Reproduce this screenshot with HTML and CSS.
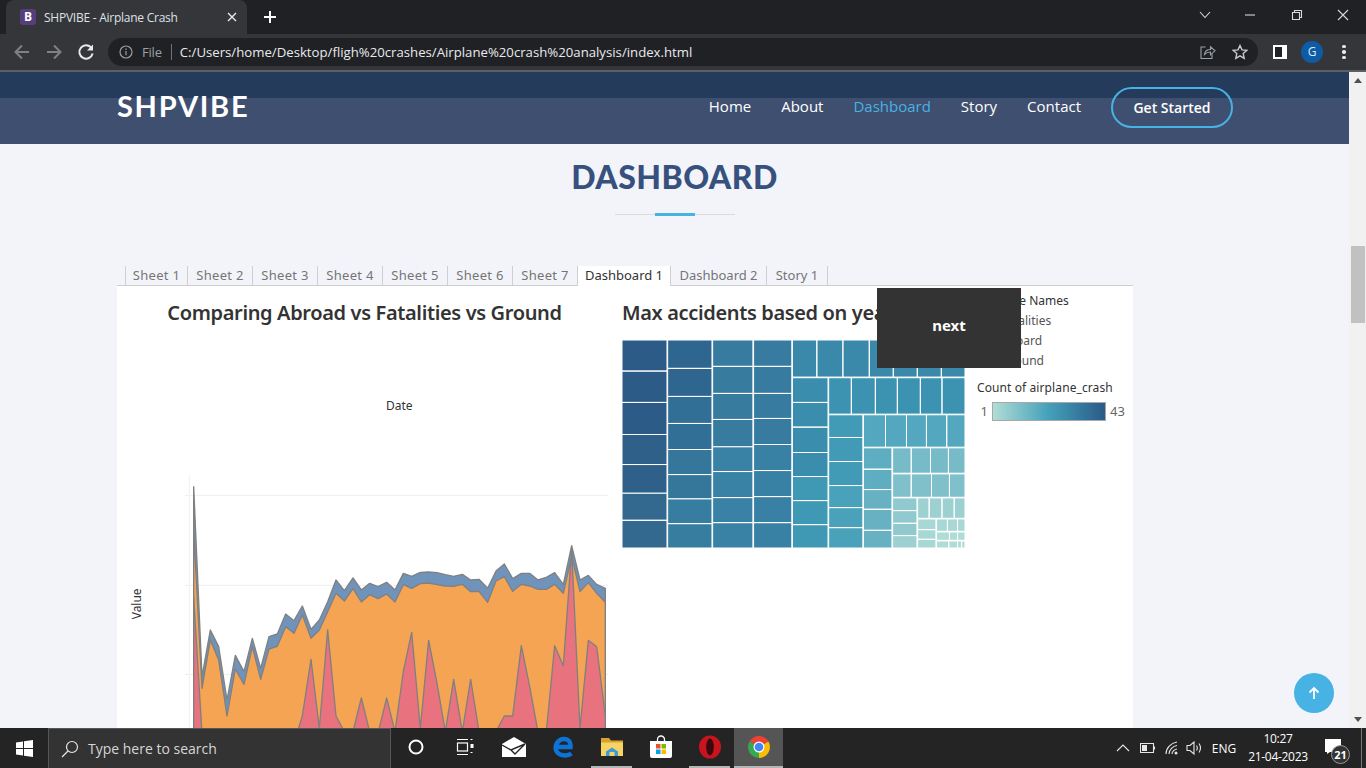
FILE: index.html
```html
<!DOCTYPE html>
<html lang="en">
<head>
<meta charset="utf-8">
<title>SHPVIBE - Airplane Crash</title>
<link rel="stylesheet" href="styles.css">
</head>
<body>
<div class="tabstrip">
  <div class="tab">
    <span class="favicon">B</span>
    <span class="tab-title">SHPVIBE - Airplane Crash</span>
    <svg class="tab-close" width="10" height="10" viewBox="0 0 10 10"><path d="M1 1l8 8M9 1l-8 8"/></svg>
  </div>
  <svg class="new-tab" width="14" height="14" viewBox="0 0 14 14"><path d="M7 1v12M1 7h12"/></svg>
  <div class="win-controls">
    <svg class="win-chev" width="12" height="8" viewBox="0 0 12 8"><path d="M1 1l5 5.500L11 1"/></svg>
    <svg class="win-min" width="12" height="12" viewBox="0 0 12 12"><path d="M1 6h10"/></svg>
    <svg class="win-max" width="12" height="12" viewBox="0 0 12 12"><path d="M1.500 3.500h7v7h-7zM3.500 3.500v-2h7v7h-2"/></svg>
    <svg class="win-x" width="12" height="12" viewBox="0 0 12 12"><path d="M1 1l10 10M11 1L1 11"/></svg>
  </div>
</div>
<div class="toolbar">
  <svg class="nav-ico dim" width="20" height="20" viewBox="0 0 20 20"><path d="M17 10H3.500M10 3.500L3.500 10l6.500 6.500"/></svg>
  <svg class="nav-ico dim" width="20" height="20" viewBox="0 0 20 20"><path d="M3 10h13.500M10 3.500l6.500 6.500-6.500 6.500"/></svg>
  <svg class="nav-ico" width="20" height="20" viewBox="0 0 20 20"><path d="M15.500 6A6.700 6.700 0 1 0 16.600 11.500"/><path class="fill" d="M17 2.500v6h-6z"/></svg>
  <div class="omnibox">
    <svg class="info" width="14" height="14" viewBox="0 0 14 14"><circle cx="7" cy="7" r="6"/><path d="M7 6v4.200M7 3.600v1.300"/></svg>
    <span class="file">File</span>
    <span class="url">C:/Users/home/Desktop/fligh%20crashes/Airplane%20crash%20analysis/index.html</span>
    <svg class="share" width="16" height="16" viewBox="0 0 16 16"><path d="M5.500 3H1v11.500h11V10"/><path d="M4.500 10.500C5 7 7.500 5.500 10.500 5.500V2.800L15 6.800l-4.500 4V8C8 8 6 8.800 4.500 10.500z"/></svg>
    <svg class="star" width="16" height="16" viewBox="0 0 16 16"><path d="M8 1.500l2 4.400 4.800.5-3.600 3.200 1 4.700L8 11.900l-4.200 2.400 1-4.700L1.200 6.400 6 5.900z"/></svg>
  </div>
  <span class="panel-ico"><span class="panel-inner"></span></span>
  <span class="avatar">G</span>
  <span class="kebab"><i></i><i></i><i></i></span>
</div>
<div class="viewport">
  <main class="page">
    <header class="site-header">
      <div class="logo">SHPVIBE</div>
      <nav class="site-nav">
        <a>Home</a><a>About</a><a class="current">Dashboard</a><a>Story</a><a>Contact</a>
        <a class="cta">Get Started</a>
      </nav>
    </header>
    <section class="section">
      <h2 class="section-title">DASHBOARD</h2>
      <div class="section-rule"></div>
      <div class="embed">
        <div class="sheet-tabs">
          <span class="sheet-tab first">Sheet 1</span>
          <span class="sheet-tab">Sheet 2</span>
          <span class="sheet-tab">Sheet 3</span>
          <span class="sheet-tab">Sheet 4</span>
          <span class="sheet-tab">Sheet 5</span>
          <span class="sheet-tab">Sheet 6</span>
          <span class="sheet-tab">Sheet 7</span>
          <span class="sheet-tab active">Dashboard 1</span>
          <span class="sheet-tab">Dashboard 2</span>
          <span class="sheet-tab">Story 1</span>
        </div>
        <div class="board">
          <div class="col-area">
            <h3 class="viz-title">Comparing Abroad vs Fatalities vs Ground</h3>
            <div class="axis-top">Date</div>
            <svg class="area-chart" width="492" height="260" viewBox="0 0 1476 780">
              <path class="grid" d="M195 76H1465M195 346H1465M195 613H1465"/>
              <path class="axis" d="M208 15V790"/>
              <path class="s-blue" d="M221 50L246 620 271 480 296 530 321 690 346 556 372 605 397 505 422 595 447 500 472 492 497 432 522 452 547 408 573 478 598 450 623 395 648 330 673 362 699 324 724 360 749 340 774 350 800 337 825 360 850 310 875 319 901 307 926 306 951 308 976 314 1001 319 1027 313 1052 330 1077 328 1103 355 1128 303 1153 282 1178 326 1204 310 1229 310 1254 330 1279 322 1304 308 1330 343 1355 227 1380 330 1405 316 1430 343 1456 355V800H221Z"/>
              <path class="s-orange" d="M221 180L246 655 271 510 296 570 321 738 346 597 372 643 397 530 422 628 447 537 472 529 497 470 522 490 547 435 573 505 598 480 623 425 648 370 673 393 699 356 724 396 749 374 774 386 800 372 825 396 850 344 875 355 901 341 926 339 951 344 976 348 1001 349 1027 343 1052 365 1077 364 1103 397 1128 333 1153 320 1178 364 1204 343 1229 348 1254 358 1279 358 1304 343 1330 370 1355 260 1380 365 1405 338 1430 370 1456 397V800H221Z"/>
              <path class="s-red" d="M221 380L246 790H531L547 738 573 568 598 775 623 480 648 738 673 785H699L724 684 749 785H775L800 684 825 785 850 605 875 487 901 775 926 511 951 640 976 785 1001 628 1027 785 1052 628 1077 785H1128L1153 738H1178L1204 527 1229 650 1254 785H1279L1304 527 1330 587 1355 240 1380 775 1405 511 1430 530 1456 738V800H221Z"/>
              <text class="value-label" transform="translate(62 448) rotate(-90)">Value</text>
            </svg>
          </div>
          <div class="col-tree">
            <h3 class="viz-title left">Max accidents based on year</h3>
            <svg class="treemap" width="343" height="208" viewBox="36 240 1014 623" preserveAspectRatio="none">
              <path fill="#2c5b87" d="M36 240H169V333H36ZM36 333H169V427H36ZM36 427H169V523H36Z"/>
              <path fill="#2e608a" d="M36 523H169V613H36ZM36 613H169V699H36Z"/>
              <path fill="#33698f" d="M36 699H169V780H36ZM36 780H169V863H36Z"/>
              <path fill="#2f6690" d="M171 240H302V325H171ZM171 325H302V409H171Z"/>
              <path fill="#326f96" d="M171 409H302V490H171ZM171 490H302V568H171Z"/>
              <path fill="#35779b" d="M171 568H302V643H171ZM171 643H302V716H171Z"/>
              <path fill="#377d9f" d="M171 716H302V790H171ZM171 790H302V863H171Z"/>
              <path fill="#377b9f" d="M304 240H423V319H304ZM304 319H423V400H304ZM304 400H423V478H304ZM304 478H423V560H304Z"/>
              <path fill="#3982a5" d="M304 560H423V634H304ZM304 634H423V712H304ZM304 712H423V787H304ZM304 787H423V863H304Z"/>
              <path fill="#377ca0" d="M425 240H538V319H425ZM425 319H538V400H425ZM425 400H538V475H425ZM425 475H538V553H425Z"/>
              <path fill="#3981a4" d="M425 553H538V631H425ZM425 631H538V709H425ZM425 709H538V787H425ZM425 787H538V863H425Z"/>
              <path fill="#3a88aa" d="M540 240H612V351H540ZM612 240H689V351H612ZM689 240H767V351H689ZM767 240H838V351H767ZM838 240H909V351H838ZM909 240H980V351H909ZM980 240H1050V351H980Z"/>
              <path fill="#3b8dae" d="M540 353H645V427H540ZM540 427H645V501H540ZM540 501H645V577H540ZM540 577H645V649H540Z"/>
              <path fill="#3f98b4" d="M540 649H645V721H540ZM540 721H645V793H540ZM540 793H645V863H540Z"/>
              <path fill="#3c93b1" d="M647 353H714V462H647ZM714 353H785V462H714ZM785 353H850V462H785ZM850 353H918V462H850ZM918 353H982V462H918ZM982 353H1050V462H982Z"/>
              <path fill="#419bb6" d="M647 464H748V532H647ZM647 532H748V604H647ZM647 604H748V676H647Z"/>
              <path fill="#49a2ba" d="M647 676H748V742H647ZM647 742H748V802H647ZM647 802H748V863H647Z"/>
              <path fill="#53a7be" d="M750 464H815V561H750ZM815 464H877V561H815ZM877 464H936V561H877ZM936 464H996V561H936ZM996 464H1050V561H996Z"/>
              <path fill="#5eadc1" d="M750 563H834V627H750ZM750 627H834V688H750Z"/>
              <path fill="#67b1c3" d="M750 688H834V747H750ZM750 747H834V810H750ZM750 810H834V863H750Z"/>
              <path fill="#77bac8" d="M836 563H891V639H836ZM891 563H948V639H891ZM948 563H1001V639H948ZM1001 563H1050V639H1001Z"/>
              <path fill="#80c0cb" d="M836 641H891V711H836ZM891 641H951V711H891ZM951 641H1004V711H951ZM1004 641H1050V711H1004Z"/>
              <path fill="#90c9ce" d="M836 713H908V751H836ZM836 751H908V789H836ZM836 789H908V826H836Z"/>
              <path fill="#9cd0d1" d="M836 826H908V863H836ZM910 713H944V774H910ZM944 713H982V774H944ZM982 713H1018V774H982ZM1018 713H1050V774H1018Z"/>
              <path fill="#a8d8d5" d="M910 776H964V808H910ZM910 808H964V837H910ZM910 837H964V863H910ZM966 776H998V813H966ZM998 776H1028V813H998ZM1028 776H1050V813H1028Z"/>
              <path fill="#b0dcd6" d="M966 815H1004V840H966ZM1004 815H1028V840H1004ZM1028 815H1050V840H1028ZM966 842H1002V863H966ZM1002 842H1028V863H1002ZM1028 842H1040V863H1028ZM1040 842H1050V863H1040Z"/>
            </svg>
          </div>
          <aside class="col-legend">
            <div class="legend-head">Measure Names</div>
            <ul class="legend-list">
              <li>Fatalities</li>
              <li>Aboard</li>
              <li>Ground</li>
            </ul>
            <div class="legend-head ramp-title">Count of airplane_crash</div>
            <div class="ramp-row"><span class="ramp-min">1</span><span class="ramp"></span><span class="ramp-max">43</span></div>
          </aside>
          <div class="next-box">next</div>
        </div>
      </div>
    </section>
    <a class="back-top"><svg width="14" height="14" viewBox="0 0 14 14"><path d="M7 13V2M2.500 6.500L7 2l4.500 4.500"/></svg></a>
  </main>
  <div class="scrollbar">
    <span class="sb-btn"><i class="tri-up"></i></span>
    <span class="sb-track"><span class="sb-thumb"></span></span>
    <span class="sb-btn"><i class="tri-down"></i></span>
  </div>
</div>
<footer class="taskbar">
  <span class="start">
    <svg width="17" height="17" viewBox="0 0 17 17"><path d="M0 2.400L7 1.400V8H0ZM8 1.300L17 0V8H8ZM0 9H7V15.600L0 14.600ZM8 9H17V17L8 15.700Z"/></svg>
  </span>
  <div class="search">
    <svg width="20" height="20" viewBox="0 0 20 20"><circle cx="12" cy="8" r="5.500"/><path d="M8 12l-6 6"/></svg>
    <span>Type here to search</span>
  </div>
  <span class="tb-app"><svg width="18" height="18" viewBox="0 0 18 18"><circle cx="9" cy="9" r="6.500" fill="none" stroke="#fff" stroke-width="2"/></svg></span>
  <span class="tb-app"><svg width="18" height="18" viewBox="0 0 18 18"><g fill="none" stroke="#fff" stroke-width="1.200"><path d="M1 1.500H12M1 16.500H12"/><rect x="1.500" y="5" width="10" height="8"/><path d="M14.500 1.500h2M14.500 14.500h2"/></g><rect x="14.500" y="6" width="3" height="4" fill="#fff"/></svg></span>
  <span class="tb-app"><svg width="24" height="20" viewBox="0 0 24 20"><path fill="#fff" d="M0 7L12 0l12 7V20H0z"/><path fill="none" stroke="#242424" stroke-width="1.400" d="M0 8L9 13 23 7 13 17 9 13"/></svg></span>
  <span class="tb-app"><svg width="22" height="22" viewBox="0 0 22 22"><path fill="none" stroke="#0c74d6" stroke-width="4.500" d="M19.500 17.500C16 20 6.500 21 4 14 2.500 8 7 3 12 3c4.500 0 7 3 6.500 8H4"/></svg></span>
  <span class="tb-app wide-mark"><svg width="22" height="20" viewBox="0 0 22 20"><path fill="#d9a22c" d="M0 1h8l2 2.500h12V19H0z"/><path fill="#f6d365" d="M0 5.500h22V19H0z"/><path fill="#3f9bd8" d="M5 19v-4.500L11 10.500l6 4V19h-3.500v-4h-5v4z"/></svg></span>
  <span class="tb-app"><svg width="24" height="24" viewBox="0 0 24 24"><path fill="none" stroke="#fff" stroke-width="1.300" d="M8.500 6V4.500a3.500 3.500 0 0 1 7 0V6"/><path fill="#fff" d="M1 6h22v15a2 2 0 0 1-2 2H3a2 2 0 0 1-2-2z"/><rect x="7" y="9" width="4.500" height="4.500" fill="#f25022"/><rect x="12.500" y="9" width="4.500" height="4.500" fill="#7fba00"/><rect x="7" y="14.500" width="4.500" height="4.500" fill="#00a4ef"/><rect x="12.500" y="14.500" width="4.500" height="4.500" fill="#ffb900"/></svg></span>
  <span class="tb-app wide-mark"><svg width="24" height="24" viewBox="0 0 24 24"><ellipse cx="12" cy="12" rx="11" ry="11.500" fill="#c8141f"/><ellipse cx="12" cy="12" rx="3.800" ry="8.500" fill="#3a0a0e"/></svg></span>
  <span class="tb-app on"><svg width="24" height="24" viewBox="0 0 24 24"><path fill="#ea4335" d="M12 12L2.500 6.500A11 11 0 0 1 21.500 6.500Z"/><path fill="#fbbc05" d="M12 12L21.500 6.500A11 11 0 0 1 12 23Z"/><path fill="#34a853" d="M12 12L12 23A11 11 0 0 1 2.500 6.500Z"/><circle cx="12" cy="12" r="5.500" fill="#fff"/><circle cx="12" cy="12" r="4.300" fill="#4285f4"/></svg></span>
  <div class="tray">
    <span class="tray-cell c25"><svg width="14" height="8" viewBox="0 0 14 8"><path d="M1 7l6-6 6 6"/></svg></span>
    <span class="tray-cell c25"><svg width="16" height="10" viewBox="0 0 16 10"><path d="M.5.500h13v9H.5zM14.500 3.500v3"/><rect class="fill" x="2" y="2" width="5" height="6"/></svg></span>
    <span class="tray-cell c23"><svg width="14" height="14" viewBox="0 0 14 14"><path d="M1 13C1 7 6 2 12 1M4 13C4 9 8 5 12 4.500M7 13c0-2 2-4.500 5-5"/><circle class="fill" cx="11" cy="12" r="1.500"/></svg></span>
    <span class="tray-cell c23"><svg width="17" height="14" viewBox="0 0 17 14"><path d="M1 4.500h3L8 1v12L4 9.500H1zM10.500 4.500c1 1.500 1 3.500 0 5M13 2.500c2 3 2 6 0 9"/></svg></span>
    <span class="tray-cell eng">ENG</span>
    <span class="clock"><span>10:27</span><span>21-04-2023</span></span>
    <span class="notif">
      <svg width="18" height="15" viewBox="0 0 18 15"><path fill="#fff" d="M0 0h16v13H5l-3 2v-2H0z"/></svg>
      <span class="notif-badge">21</span>
    </span>
    <span class="show-desktop"></span>
  </div>
</footer>
</body>
</html>
```
FILE: styles.css
```css
* { box-sizing: border-box; }
html, body { margin: 0; height: 768px; overflow: hidden; }
body { display: flex; flex-direction: column; font-family: "Open Sans", sans-serif; background: #202124; }
svg { display: block; flex: none; }

/* browser chrome */
.tabstrip { height: 34px; flex: none; background: #202124; display: flex; align-items: center; padding-left: 6px; }
.tab { width: 241px; height: 34px; background: #35363a; border-radius: 8px 8px 0 0; display: flex; align-items: center; padding: 0 10px 0 14px; color: #dee1e6; }
.favicon { width: 16px; height: 16px; border-radius: 3px; background: #563d7c; color: #fff; font: 700 12px/16px "Open Sans", sans-serif; text-align: center; flex: none; }
.tab-title { margin-left: 8px; font-size: 12px; letter-spacing: -.25px; white-space: nowrap; flex: 1; }
.tab-close { fill: none; stroke: #e8eaed; stroke-width: 1.400; }
.new-tab { margin-left: 16px; fill: none; stroke: #fff; stroke-width: 2; }
.win-controls { margin-left: auto; display: flex; align-items: center; height: 100%; padding-bottom: 4px; }
.win-controls svg { fill: none; stroke: #d8d9da; stroke-width: 1.100; }
.win-chev { margin-right: 33px; }
.win-min { margin-right: 35px; }
.win-max { margin-right: 34px; }
.win-x { margin-right: 17px; }
.toolbar { height: 38px; flex: none; background: #35363a; border-bottom: 2px solid #5b6068; display: flex; align-items: center; padding: 0 0 0 12px; }
.nav-ico { fill: none; stroke: #e8eaed; stroke-width: 2; margin-right: 12px; }
.nav-ico.dim { stroke: #7f8184; }
.nav-ico .fill { fill: #e8eaed; stroke: none; }
.omnibox { width: 1150px; height: 28px; flex: none; border-radius: 14px; background: #202124; display: flex; align-items: center; padding-left: 11px; }
.info { fill: none; stroke: #9aa0a6; stroke-width: 1.200; }
.file { margin-left: 9px; padding-right: 9px; font-size: 13px; line-height: 16px; color: #9aa0a6; border-right: 1px solid #6f7276; letter-spacing: -.2px; }
.url { margin-left: 8px; flex: 1; font-size: 13.200px; color: #e8eaed; white-space: nowrap; }
.share { fill: none; stroke: #9aa0a6; stroke-width: 1.100; margin-right: 16px; }
.star { fill: none; stroke: #c9cbce; stroke-width: 1.400; margin-right: 10px; }
.panel-ico { margin-left: 15px; width: 14px; height: 14px; background: #fff; padding: 2px 5px 2px 2px; flex: none; }
.panel-inner { display: block; width: 7px; height: 10px; background: #202124; }
.avatar { margin-left: 14px; width: 22px; height: 22px; border-radius: 50%; background: #0f5ca6; color: #dfe9f5; font-size: 12px; line-height: 22px; text-align: center; flex: none; }
.kebab { margin-left: 19px; width: 4px; display: flex; flex-direction: column; gap: 2px; flex: none; }
.kebab i { width: 3.500px; height: 3.500px; border-radius: 50%; background: #e8eaed; }

/* page */
.viewport { height: 656px; flex: none; display: flex; }
.page { width: 1349px; flex: none; position: relative; overflow: hidden; background: #f3f4fa; }
.site-header { height: 72px; padding: 11px 116px 0 117px; display: flex; align-items: center; justify-content: space-between; background: linear-gradient(#253b5c 26px, #3f4f6f 26px); }
.logo { font: 700 29px/36px Lato, sans-serif; letter-spacing: 1.700px; color: #fff; margin-top: -16px; }
.site-nav { display: flex; align-items: center; gap: 30px; font-size: 15px; font-weight: 500; color: #fff; margin-top: -13px; }
.site-nav a { margin-bottom: 2px; }
.site-nav .current { color: #47b2e4; }
.site-nav .cta { width: 122px; height: 41px; margin: 0; border: 2px solid #47b2e4; border-radius: 21px; font-size: 14px; font-weight: 600; line-height: 37px; text-align: center; }
.section-title { margin: 13px 0 0; font: 900 32px/40px Lato, sans-serif; letter-spacing: .45px; color: #37517e; text-align: center; }
.section-rule { width: 120px; height: 3px; margin: 16px auto 0; background: linear-gradient(#47b2e4, #47b2e4) center / 40px 3px no-repeat, linear-gradient(#d9dbe1, #d9dbe1) center 1px / 120px 1px no-repeat; }
.embed { width: 1016px; margin: 50px 0 0 117px; }
.sheet-tabs { height: 20px; display: flex; padding-left: 8px; border-bottom: 1px solid #cfcfcf; }
.sheet-tab { height: 19px; flex: none; border-right: 1px solid #cfcfcf; font: 13px/18px "Noto Sans", sans-serif; color: #757575; text-align: center; width: 65px; }
.sheet-tab:nth-child(-n+7) { letter-spacing: .3px; }
.sheet-tab.first { width: 63px; border-left: 1px solid #cfcfcf; }
.sheet-tab.active { width: 93px; height: 20px; background: #fff; color: #333; }
.sheet-tab:nth-child(9) { width: 96px; }
.sheet-tab:nth-child(10) { width: 61px; }
.board { position: relative; height: 500px; background: #fff; display: flex; }
.col-area { width: 495px; flex: none; }
.viz-title { margin: 13px 0 0; font: 600 20px/28px "Noto Sans", sans-serif; letter-spacing: -.36px; color: #333; text-align: center; white-space: nowrap; }
.viz-title.left { text-align: left; }
.axis-top { margin: 71px 0 0 269px; font: 12px/16px "Noto Sans", sans-serif; color: #333; }
.area-chart { margin: 56px 0 0 3px; }
.grid { fill: none; stroke: #eeeeee; stroke-width: 3; }
.axis { fill: none; stroke: #f0f0f0; stroke-width: 3; }
.s-blue, .s-orange, .s-red { stroke: #808080; stroke-width: 4; stroke-linejoin: round; }
.s-blue { fill: #6f93bb; }
.s-orange { fill: #f4a452; }
.s-red { fill: #e8737e; }
.value-label { font: 36px "Noto Sans", sans-serif; fill: #333; }
.col-tree { width: 343px; margin-left: 10px; flex: none; }
.treemap { margin-top: 13px; }
.treemap path { stroke: #fff; stroke-width: 1; vector-effect: non-scaling-stroke; }
.col-legend { margin-left: 12px; width: 156px; padding-top: 5px; font: 12px/20px "Noto Sans", sans-serif; color: #333; }
.legend-list { list-style: none; margin: 0; padding: 0 0 0 24px; color: #555; }
.ramp-title { margin-top: 7px; letter-spacing: .1px; }
.ramp-row { display: flex; align-items: center; margin-top: 3px; color: #666; font-size: 13px; }
.ramp { width: 114px; height: 19px; margin-right: 4px; border: 1px solid #a8a8a8; background: linear-gradient(90deg, #b2ddd5, #43a0ba 50%, #2b5a87); }
.ramp-min { margin-right: 4px; width: 11px; text-align: right; }
.next-box { position: absolute; left: 760px; top: 2px; width: 144px; height: 80px; background: #333; color: #fff; font: 700 15px/75px "Noto Sans", sans-serif; text-align: center; }
.back-top { position: absolute; right: 15px; bottom: 15px; width: 40px; height: 40px; border-radius: 50%; background: #47b2e4; display: flex; align-items: center; justify-content: center; }
.back-top svg { fill: none; stroke: #fff; stroke-width: 1.800; }

/* scrollbar */
.scrollbar { width: 17px; flex: none; background: #f1f1f1; display: flex; flex-direction: column; }
.sb-btn { height: 17px; flex: none; display: flex; align-items: center; justify-content: center; }
.sb-track { flex: 1; padding: 157px 1px 0 2px; }
.sb-thumb { display: block; height: 77px; background: #c1c1c1; }
.tri-up { width: 0; height: 0; border: 4px solid transparent; border-top: 0; border-bottom: 5px solid #505050; }
.tri-down { width: 0; height: 0; border: 4px solid transparent; border-bottom: 0; border-top: 5px solid #505050; }

/* taskbar */
.taskbar { height: 40px; flex: none; background: #242424; display: flex; align-items: stretch; color: #fff; }
.start { width: 48px; flex: none; display: flex; align-items: center; justify-content: center; }
.start svg { fill: #fff; }
.search { width: 343px; flex: none; background: #333; border: 1px solid #565656; border-bottom: 0; display: flex; align-items: center; padding-left: 11px; font-size: 14px; color: #d6d6d6; gap: 8px; }
.search svg { fill: none; stroke: #e6e6e6; stroke-width: 1.200; }
.tb-app { width: 49px; flex: none; display: flex; align-items: center; justify-content: center; border-bottom: 2px solid transparent; }
.tb-app.wide-mark { border-image: linear-gradient(90deg, transparent 10%, #b5b5b5 10%, #b5b5b5 90%, transparent 90%) 1; }
.tb-app.on { background: #555; border-bottom-color: #b5b5b5; }
.tray { margin-left: auto; display: flex; align-items: stretch; }
.tray-cell { display: flex; align-items: center; justify-content: center; font-size: 12px; }
.tray-cell svg { fill: none; stroke: #e6e6e6; stroke-width: 1.100; }
.tray-cell svg .fill { fill: #e6e6e6; stroke: none; }
.c25 { width: 25px; }
.c23 { width: 23px; }
.eng { width: 36px; }
.clock { width: 72px; display: flex; flex-direction: column; align-items: center; justify-content: center; font-size: 12px; line-height: 18px; letter-spacing: -.3px; }
.notif { width: 40px; padding-bottom: 3px; position: relative; display: flex; align-items: center; justify-content: center; }
.notif-badge { position: absolute; left: 17px; top: 17px; width: 19px; height: 19px; border-radius: 50%; background: #333; border: 1px solid #999; font-size: 11px; font-weight: 700; line-height: 17px; text-align: center; }
.show-desktop { width: 5px; margin-left: 7px; border-left: 1px solid #777; }
```
